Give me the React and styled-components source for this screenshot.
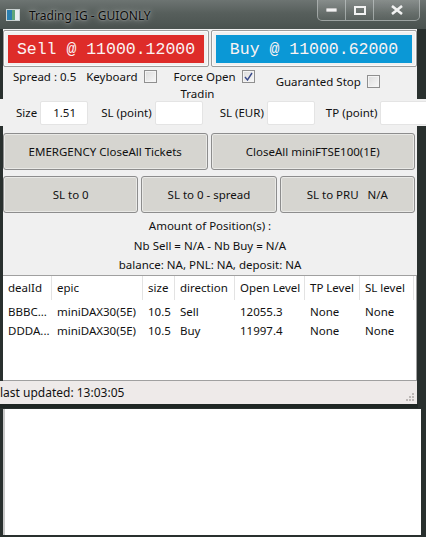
import React from "react";
import styled, { createGlobalStyle } from "styled-components";

const Global = createGlobalStyle`
  html, body {
    margin: 0;
    padding: 0;
    background: #2a3230;
    overflow: hidden;
  }
  body {
    font-family: "Noto Sans", "Liberation Sans", sans-serif;
    font-size: 11.5px;
    color: #111;
  }
`;

const Screen = styled.div`
  width: 426px;
  height: 537px;
  background: #29302e;
  display: flex;
  flex-direction: column;
  overflow: hidden;
`;

const TitleBar = styled.div`
  height: 29px;
  flex: none;
  display: flex;
  align-items: flex-start;
  background: linear-gradient(180deg, #6d7472 0%, #575f5c 45%, #4a524f 100%);
`;

const AppIcon = styled.div`
  width: 12px;
  height: 10px;
  margin: 9px 0 0 6px;
  border: 1px solid #c8d0d0;
  background: linear-gradient(90deg, #2a7fb0 0 40%, #5fa67a 40% 70%, #e8eef0 70%);
`;

const Title = styled.div`
  margin: 7px 0 0 9px;
  font-size: 12px;
  color: #0b0b0b;
  text-shadow: 0 0 6px rgba(255, 255, 255, 0.6), 0 0 2px rgba(255, 255, 255, 0.5);
`;

const Caption = styled.div`
  margin-left: auto;
  margin-right: 6px;
  display: flex;
  height: 20px;
  border: 1px solid rgba(220, 225, 225, 0.55);
  border-top: none;
  border-radius: 0 0 5px 5px;
  overflow: hidden;
`;

const CapBtn = styled.div`
  width: ${(p) => p.w}px;
  display: flex;
  align-items: center;
  justify-content: center;
  background: linear-gradient(180deg, rgba(255,255,255,0.18), rgba(255,255,255,0.05));
  border-left: ${(p) => (p.first ? "none" : "1px solid rgba(220,225,225,0.5)")};
`;

const Window = styled.div`
  margin-left: 3px;
  width: 414px;
  background: #f0f0f0;
  display: flex;
  flex-direction: column;
  flex: none;
`;

const PriceRow = styled.div`
  display: flex;
  gap: 2px;
  padding-top: 1px;
`;

const PriceFrame = styled.div`
  flex: 1;
  height: 37px;
  box-sizing: border-box;
  border: 1px solid #9c9c9c;
  box-shadow: inset 0 0 0 1px #fafafa;
  border-radius: 2px;
  padding: 4px 4px 3px;
  display: flex;
`;

const PriceButton = styled.div`
  flex: 1;
  background: ${(p) => p.bg};
  color: #fbf3f3;
  font-family: "Liberation Mono", monospace;
  font-size: 16.5px;
  display: flex;
  align-items: center;
  justify-content: center;
`;

const OptionRow = styled.div`
  display: flex;
  align-items: flex-start;
  height: 32px;
  padding-left: 10px;
`;

const Option = styled.div`
  display: flex;
  align-items: center;
  gap: 6px;
  margin-right: ${(p) => p.mr || 0}px;
  margin-top: ${(p) => p.mt || 2}px;
  position: relative;
`;

const Check = styled.div`
  width: 11px;
  height: 11px;
  border: 1px solid #8f8f8f;
  background: linear-gradient(135deg, #dcdcdc, #f8f8f8);
  box-shadow: inset 0 0 0 1px #f4f4f4;
  display: flex;
  align-items: center;
  justify-content: center;
`;

const Tradin = styled.span`
  position: absolute;
  left: 7px;
  top: 17px;
  white-space: nowrap;
  font-size: 11.5px;
`;

const FieldRow = styled.div`
  display: flex;
  align-items: center;
  margin-left: -3px;
  width: 426px;
  height: 27px;
  background: #f0f0f0;
  padding-left: 16px;
  box-sizing: border-box;
  overflow: hidden;
`;

const FieldLabel = styled.span`
  margin-right: 3px;
  white-space: nowrap;
`;

const Input = styled.div`
  flex: none;
  width: 48px;
  height: 24px;
  box-sizing: border-box;
  background: #fff;
  border: 1px solid #e4e4e4;
  border-radius: 2px;
  margin-right: ${(p) => p.mr}px;
  padding: 3px 0 0 12px;
`;

const ButtonGrid = styled.div`
  display: grid;
  grid-template-columns: repeat(${(p) => p.cols}, 1fr);
  gap: 3px;
  margin-top: ${(p) => p.mt}px;
  padding-right: 2px;
`;

const Btn = styled.div`
  height: 37px;
  box-sizing: border-box;
  display: flex;
  align-items: center;
  justify-content: center;
  background: #d6d5d0;
  border: 1px solid #8d8d8d;
  border-radius: 3px;
  box-shadow: inset 0 0 0 1px #e9e9e6;
  white-space: pre;
`;

const Summary = styled.div`
  margin-top: 3px;
  display: flex;
  flex-direction: column;
  align-items: center;
  line-height: 19.5px;
`;

const Table = styled.div`
  height: 106px;
  background: #fff;
  border: 1px solid #a0a0a0;
  border-left: none;
  box-sizing: border-box;
`;

const Row = styled.div`
  display: grid;
  grid-template-columns: 49px 91px 32px 60px 70px 55px 54px;
  height: ${(p) => (p.head ? 24 : 19.5)}px;
  align-items: center;
  margin-bottom: ${(p) => (p.head ? 2 : 0)}px;
`;

const Cell = styled.div`
  padding-left: 5px;
  height: 100%;
  display: flex;
  align-items: center;
  white-space: nowrap;
  overflow: hidden;
  border-right: ${(p) => (p.head ? "1px solid #e3e3e3" : "none")};
`;

const StatusBar = styled.div`
  height: 23px;
  background: #eeeae9;
  display: flex;
  align-items: center;
  margin-left: -3px;
  font-size: 12px;
  position: relative;
`;

const Grip = styled.svg`
  position: absolute;
  right: 3px;
  bottom: 3px;
`;

const Divider = styled.div`
  height: 4px;
  flex: none;
  background: #1f2624;
  width: 418px;
`;

const LowerPanel = styled.div`
  flex: 1;
  margin: 1px 5px 2px 3px;
  background: #fff;
  border-left: 2px solid #c9c9c9;
`;

const cols = ["dealId", "epic", "size", "direction", "Open Level", "TP Level", "SL level"];
const rows = [
  ["BBBC...", "miniDAX30(5E)", "10.5", "Sell", "12055.3", "None", "None"],
  ["DDDA...", "miniDAX30(5E)", "10.5", "Buy", "11997.4", "None", "None"],
];

export default function App() {
  return (
    <Screen>
      <Global />
      <TitleBar>
        <AppIcon />
        <Title>Trading IG - GUIONLY</Title>
        <Caption>
          <CapBtn w={27} first>
            <svg width="11" height="4"><rect width="11" height="4" fill="#f2f2f2" stroke="#555" strokeWidth="0.6" /></svg>
          </CapBtn>
          <CapBtn w={27}>
            <svg width="12" height="9"><rect x="1" y="1" width="10" height="7" fill="none" stroke="#f2f2f2" strokeWidth="2" /></svg>
          </CapBtn>
          <CapBtn w={45}>
            <svg width="12" height="10"><path d="M1 1 L11 9 M11 1 L1 9" stroke="#f2f2f2" strokeWidth="2.6" /></svg>
          </CapBtn>
        </Caption>
      </TitleBar>
      <Window>
        <PriceRow>
          <PriceFrame>
            <PriceButton bg="#de2c29">Sell @ 11000.12000</PriceButton>
          </PriceFrame>
          <PriceFrame>
            <PriceButton bg="#0b98d6">Buy @ 11000.62000</PriceButton>
          </PriceFrame>
        </PriceRow>
        <OptionRow>
          <Option mr={10}>Spread : 0.5</Option>
          <Option mr={17}>
            Keyboard <Check />
          </Option>
          <Option mr={21}>
            Force Open
            <Check>
              <svg width="9" height="9"><path d="M1 5 L3.5 8 L8 1" fill="none" stroke="#3a4a8a" strokeWidth="1.4" /></svg>
            </Check>
            <Tradin>Tradin</Tradin>
          </Option>
          <Option mt={7}>
            Guaranted Stop <Check />
          </Option>
        </OptionRow>
        <FieldRow>
          <FieldLabel>Size</FieldLabel>
          <Input mr={13}>1.51</Input>
          <FieldLabel>SL (point)</FieldLabel>
          <Input mr={17} />
          <FieldLabel>SL (EUR)</FieldLabel>
          <Input mr={11} />
          <FieldLabel>TP (point)</FieldLabel>
          <Input mr={0} />
        </FieldRow>
        <ButtonGrid cols={2} mt={7}>
          <Btn>EMERGENCY CloseAll Tickets</Btn>
          <Btn>CloseAll miniFTSE100(1E)</Btn>
        </ButtonGrid>
        <ButtonGrid cols={3} mt={6}>
          <Btn>SL to 0</Btn>
          <Btn>SL to 0 - spread</Btn>
          <Btn>{"SL to PRU   N/A"}</Btn>
        </ButtonGrid>
        <Summary>
          <div>Amount of Position(s) :</div>
          <div>Nb Sell = N/A - Nb Buy = N/A</div>
          <div>balance: NA, PNL: NA, deposit: NA</div>
        </Summary>
        <Table>
          <Row head>
            {cols.map((c) => (
              <Cell head key={c}>{c}</Cell>
            ))}
          </Row>
          {rows.map((r) => (
            <Row key={r[0]}>
              {r.map((v, i) => (
                <Cell key={i}>{v}</Cell>
              ))}
            </Row>
          ))}
        </Table>
        <StatusBar>
          last updated: 13:03:05
          <Grip width="10" height="10">
            {[[8, 2], [8, 5], [5, 5], [8, 8], [5, 8], [2, 8]].map(([x, y]) => (
              <rect key={x + "-" + y} x={x} y={y} width="2" height="2" fill="#bdb8b6" />
            ))}
          </Grip>
        </StatusBar>
      </Window>
      <Divider />
      <LowerPanel />
    </Screen>
  );
}
